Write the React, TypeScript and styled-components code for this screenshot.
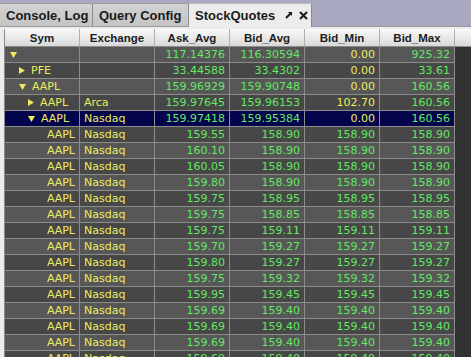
import styled, { createGlobalStyle } from 'styled-components';

const GlobalStyle = createGlobalStyle`
  html, body {
    margin: 0;
    padding: 0;
    background: #ececec;
  }
`;

const Frame = styled.div`
  width: 471px;
  height: 357px;
  overflow: hidden;
  display: flex;
  flex-direction: column;
  background: #ececec;
  font-family: 'DejaVu Sans', 'Liberation Sans', sans-serif;
`;

const TabBar = styled.div`
  display: flex;
  align-items: flex-end;
  height: 26px;
  flex-shrink: 0;
  background: #a8a8c1;
  border-bottom: 1px solid #9a9a9a;
`;

const Tab = styled.div<{ $active?: boolean; $width: number }>`
  display: flex;
  align-items: center;
  box-sizing: border-box;
  width: ${(p) => p.$width}px;
  height: ${(p) => (p.$active ? 24 : 23)}px;
  margin-bottom: ${(p) => (p.$active ? -1 : 0)}px;
  padding: 0 0 0 6px;
  background: ${(p) => (p.$active ? '#ececec' : 'linear-gradient(#d2d2d2, #c4c4c4)')};
  border-right: 1px solid #8c8c8c;
  border-top: 1px solid ${(p) => (p.$active ? '#bdbdbd' : '#a0a0a0')};
  font-family: 'Liberation Sans', Arial, sans-serif;
  font-weight: bold;
  font-size: 13px;
  color: #1a1a1a;
`;

const TabIcons = styled.div`
  display: flex;
  align-items: center;
  gap: 6px;
  margin-left: 10px;
`;

const Body = styled.div`
  flex: 1;
  padding: 2px 0 0 4px;
  display: flex;
  min-height: 0;
`;

const Viewport = styled.div`
  flex: 1;
  background: #323232;
  overflow: hidden;
  border-left: 1px solid #8a8a8a;
`;

const HeaderRow = styled.div`
  display: flex;
  height: 18px;
  background: linear-gradient(#f9f9f9, #e6e6e6 60%, #d8d8d8);
  border-bottom: 1px solid #8a8a8a;
  box-sizing: border-box;
`;

const HeaderCell = styled.div<{ $filler?: boolean }>`
  box-sizing: border-box;
  ${(p) => (p.$filler ? 'flex: 1;' : 'width: 75px;')}
  border-right: ${(p) => (p.$filler ? 'none' : '1px solid #b0b0b0')};
  display: flex;
  align-items: center;
  justify-content: center;
  font-family: 'Liberation Sans', Arial, sans-serif;
  font-weight: bold;
  font-size: 11.5px;
  color: #1c1c1c;
`;

const Row = styled.div<{ $shade: 'light' | 'dark' | 'sel' }>`
  display: flex;
  width: 450px;
  height: 16px;
  box-sizing: border-box;
  border-bottom: 1px solid #8c8c8c;
  background: ${(p) =>
    p.$shade === 'sel' ? '#04044c' : p.$shade === 'light' ? '#575757' : '#474747'};
`;

const Cell = styled.div<{ $align?: 'left' | 'right'; $color?: string; $indent?: number }>`
  box-sizing: border-box;
  width: 75px;
  display: flex;
  align-items: center;
  justify-content: ${(p) => (p.$align === 'right' ? 'flex-end' : 'flex-start')};
  padding: ${(p) => (p.$align === 'right' ? '0 4px 0 0' : `0 0 0 ${4 + (p.$indent ?? 0)}px`)};
  border-right: 1px solid #8c8c8c;
  font-size: 11px;
  color: ${(p) => p.$color ?? '#ecec5c'};
  white-space: nowrap;
  overflow: hidden;
`;

const Arrow = styled.svg`
  flex-shrink: 0;
  margin-right: 6px;
`;

const GREEN = '#62e862';
const YELLOW = '#ecec5c';

type Group = {
  open: boolean;
  depth: number;
  sym: string;
  exch: string;
  ask: string;
  bidAvg: string;
  bidMin: string;
  bidMax: string;
};

const groups: Group[] = [
  { open: true, depth: 0, sym: '', exch: '', ask: '117.14376', bidAvg: '116.30594', bidMin: '0.00', bidMax: '925.32' },
  { open: false, depth: 1, sym: 'PFE', exch: '', ask: '33.44588', bidAvg: '33.4302', bidMin: '0.00', bidMax: '33.61' },
  { open: true, depth: 1, sym: 'AAPL', exch: '', ask: '159.96929', bidAvg: '159.90748', bidMin: '0.00', bidMax: '160.56' },
  { open: false, depth: 2, sym: 'AAPL', exch: 'Arca', ask: '159.97645', bidAvg: '159.96153', bidMin: '102.70', bidMax: '160.56' },
  { open: true, depth: 2, sym: 'AAPL', exch: 'Nasdaq', ask: '159.97418', bidAvg: '159.95384', bidMin: '0.00', bidMax: '160.56' },
];

const leaves: [string, string][] = [
  ['159.55', '158.90'],
  ['160.10', '158.90'],
  ['160.05', '158.90'],
  ['159.80', '158.90'],
  ['159.75', '158.95'],
  ['159.75', '158.85'],
  ['159.75', '159.11'],
  ['159.70', '159.27'],
  ['159.80', '159.27'],
  ['159.75', '159.32'],
  ['159.95', '159.45'],
  ['159.69', '159.40'],
  ['159.69', '159.40'],
  ['159.69', '159.40'],
  ['159.69', '159.40'],
];

const Toggle = ({ open }: { open: boolean }) =>
  open ? (
    <Arrow width="7" height="6" viewBox="0 0 7 6">
      <path d="M0 0 L7 0 L3.5 6 Z" fill={YELLOW} />
    </Arrow>
  ) : (
    <Arrow width="6" height="7" viewBox="0 0 6 7">
      <path d="M0 0 L6 3.5 L0 7 Z" fill={YELLOW} />
    </Arrow>
  );

const PinIcon = () => (
  <svg width="8" height="9" viewBox="0 0 8 9">
    <path d="M3 1 L7 1 L7 5 Z" fill="#1a1a1a" />
    <path d="M5.5 2.5 L1 7" stroke="#1a1a1a" strokeWidth="2" />
  </svg>
);

const CloseIcon = () => (
  <svg width="9" height="9" viewBox="0 0 9 9">
    <path d="M1 1 L8 8 M8 1 L1 8" stroke="#1a1a1a" strokeWidth="2" />
  </svg>
);

const columns = ['Sym', 'Exchange', 'Ask_Avg', 'Bid_Avg', 'Bid_Min', 'Bid_Max'];

export default function App() {
  return (
    <>
      <GlobalStyle />
      <Frame>
        <TabBar>
          <Tab $width={93}>Console, Log</Tab>
          <Tab $width={96}>Query Config</Tab>
          <Tab $active $width={123}>
            StockQuotes
            <TabIcons>
              <PinIcon />
              <CloseIcon />
            </TabIcons>
          </Tab>
        </TabBar>
        <Body>
          <Viewport>
            <HeaderRow>
              {columns.map((c) => (
                <HeaderCell key={c}>{c}</HeaderCell>
              ))}
              <HeaderCell $filler />
            </HeaderRow>
            {groups.map((g, i) => (
              <Row key={`g${i}`} $shade={i === 4 ? 'sel' : i % 2 === 0 ? 'light' : 'dark'}>
                <Cell $indent={1 + g.depth * 9}>
                  <Toggle open={g.open} />
                  {g.sym}
                </Cell>
                <Cell>{g.exch}</Cell>
                <Cell $align="right" $color={GREEN}>{g.ask}</Cell>
                <Cell $align="right" $color={GREEN}>{g.bidAvg}</Cell>
                <Cell $align="right" $color={YELLOW}>{g.bidMin}</Cell>
                <Cell $align="right" $color={GREEN}>{g.bidMax}</Cell>
              </Row>
            ))}
            {leaves.map(([ask, bid], i) => (
              <Row key={`l${i}`} $shade={(i + 5) % 2 === 0 ? 'light' : 'dark'}>
                <Cell $align="right">AAPL</Cell>
                <Cell>Nasdaq</Cell>
                <Cell $align="right" $color={GREEN}>{ask}</Cell>
                <Cell $align="right" $color={GREEN}>{bid}</Cell>
                <Cell $align="right" $color={GREEN}>{bid}</Cell>
                <Cell $align="right" $color={GREEN}>{bid}</Cell>
              </Row>
            ))}
          </Viewport>
        </Body>
      </Frame>
    </>
  );
}
